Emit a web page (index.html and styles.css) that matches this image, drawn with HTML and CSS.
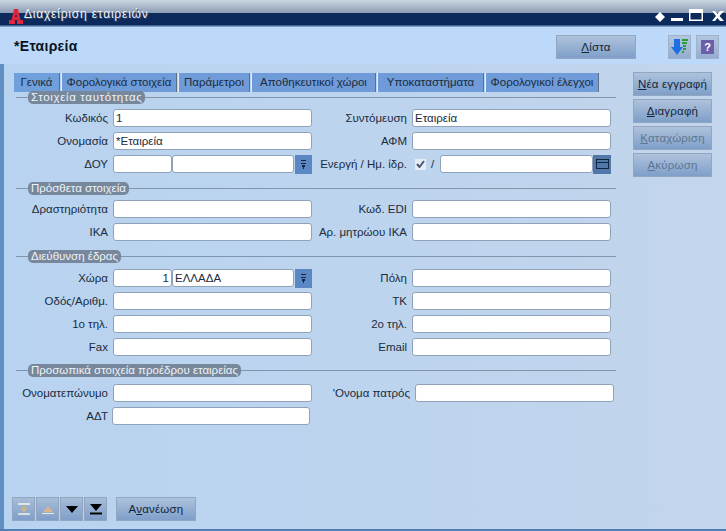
FILE: index.html
```html
<!DOCTYPE html>
<html lang="el">
<head>
    <meta charset="UTF-8">
    <meta name="viewport" content="width=device-width, initial-scale=1.0">
    <title>Διαχείριση εταιρειών</title>
    <link rel="stylesheet" href="styles.css">
</head>
<body>
    <div class="window">
        <div class="titlebar">
            <svg class="logo" width="14" height="15" viewBox="0 0 14 15">
                <path d="M5 0 H9 L11.5 11 H14 V15 H8 V12 L8.2 11 H5.8 L6 12 V15 H0 V11 H2.5 Z M7 4 L6.2 8 H7.8 Z" fill="#e0263c" fill-rule="evenodd"/>
            </svg>
            <span class="title-text">Διαχείριση εταιρειών</span>
            <div class="window-controls">
                <svg width="72" height="16" viewBox="0 0 72 16">
                    <path d="M7 4 L12 9 L7 14 L2 9 Z" fill="#fff"/>
                    <rect x="18" y="10" width="12" height="3" fill="#fff"/>
                    <path d="M36 1 H50 V13 H36 Z M37.5 5 V11.5 H48.5 V5 Z" fill="#fff" fill-rule="evenodd"/>
                    <path d="M59 3 L62 3 L64.5 6 L67 3 L71 3 L66.5 8 L71 13 L67 13 L64.5 10 L62 13 L59 13 L63 8 Z" fill="#fff"/>
                </svg>
            </div>
        </div>
        <div class="header">
            <div class="header-title">*Εταιρεία</div>
            <button class="btn btn-list"><u>Λ</u>ίστα</button>
            <div class="icon-btn icon-btn-first">
                <svg width="18" height="18" viewBox="0 0 18 18">
                    <path d="M3 1 H9 V9 H12 L6 17 L0 9 H3 Z" fill="#1f6fe0"/>
                    <path d="M11 2 H17 M11 5 H16 M12 8 H15 M12 11 H15 M11 14 H13" stroke="#2c9c3c" stroke-width="2"/>
                </svg>
            </div>
            <div class="icon-btn">
                <span class="help-mark">?</span>
            </div>
        </div>
        <div class="main">
            <div class="content">
                <div class="tabs">
                    <div class="tab tab-active">Γενικά</div>
                    <div class="tab">Φορολογικά στοιχεία</div>
                    <div class="tab">Παράμετροι</div>
                    <div class="tab">Αποθηκευτικοί χώροι</div>
                    <div class="tab">Υποκαταστήματα</div>
                    <div class="tab">Φορολογικοί έλεγχοι</div>
                </div>

                <div class="group group-first">
                    <div class="group-head"><span class="pill pill-wide">Στοιχεία ταυτότητας</span></div>
                    <div class="rows">
                        <label>Κωδικός</label><input class="field" value="1">
                        <label>Συντόμευση</label><input class="field" value="Εταιρεία">
                        <label>Ονομασία</label><input class="field" value="*Εταιρεία">
                        <label>ΑΦΜ</label><input class="field">
                        <label>ΔΟΥ</label>
                        <div class="combo">
                            <input class="field code">
                            <input class="field fill">
                            <div class="drop"><span class="drop-arrows"></span></div>
                        </div>
                        <label>Ενεργή / Ημ. ίδρ.</label>
                        <div class="combo date">
                            <span class="check">
                                <svg width="9" height="8" viewBox="0 0 9 8"><path d="M1 4 L3.5 7 L8 1" fill="none" stroke="#4a5a70" stroke-width="2"/></svg>
                            </span>
                            <span class="slash">/</span>
                            <input class="field fill">
                            <div class="drop drop-date"><span class="cal"></span></div>
                        </div>
                    </div>
                </div>

                <div class="group">
                    <div class="group-head"><span class="pill">Πρόσθετα στοιχεία</span></div>
                    <div class="rows">
                        <label>Δραστηριότητα</label><input class="field">
                        <label>Κωδ. EDI</label><input class="field">
                        <label>ΙΚΑ</label><input class="field">
                        <label>Αρ. μητρώου ΙΚΑ</label><input class="field">
                    </div>
                </div>

                <div class="group group-address">
                    <div class="group-head"><span class="pill">Διεύθυνση έδρας</span></div>
                    <div class="rows">
                        <label>Χώρα</label>
                        <div class="combo">
                            <input class="field code num" value="1">
                            <input class="field fill" value="ΕΛΛΑΔΑ">
                            <div class="drop"><span class="drop-arrows"></span></div>
                        </div>
                        <label>Πόλη</label><input class="field">
                        <label>Οδός/Αριθμ.</label><input class="field">
                        <label>ΤΚ</label><input class="field">
                        <label>1ο τηλ.</label><input class="field">
                        <label>2ο τηλ.</label><input class="field">
                        <label>Fax</label><input class="field">
                        <label>Email</label><input class="field">
                    </div>
                </div>

                <div class="group group-last">
                    <div class="group-head"><span class="pill">Προσωπικά στοιχεία προέδρου εταιρείας</span></div>
                    <div class="rows rows-wide">
                        <label>Ονοματεπώνυμο</label><input class="field">
                        <label>'Ονομα πατρός</label><input class="field">
                        <label>ΑΔΤ</label><input class="field field-short">
                    </div>
                </div>
            </div>

            <div class="side">
                <button class="btn"><u>Ν</u>έα εγγραφή</button>
                <button class="btn"><u>Δ</u>ιαγραφή</button>
                <button class="btn btn-off"><u>Κ</u>αταχώριση</button>
                <button class="btn btn-off"><u>Α</u>κύρωση</button>
            </div>
        </div>
        <div class="footer">
            <div class="nav-group">
                <div class="nav-btn">
                    <svg width="14" height="12" viewBox="0 0 14 12"><path d="M1 1 H13 M1 11 H13" stroke="#f4f4e8" stroke-width="1.5"/><path d="M7 2 L10 6 H4 Z M7 10 L10 6 H4 Z" fill="#c9b48a"/></svg>
                </div>
                <div class="nav-btn">
                    <svg width="14" height="12" viewBox="0 0 14 12"><path d="M7 3 L12 9 H2 Z" fill="#d8b490"/><path d="M1 10.5 H13" stroke="#e8e4d8" stroke-width="1.2"/></svg>
                </div>
                <div class="nav-btn">
                    <svg width="14" height="12" viewBox="0 0 14 12"><path d="M1 3 H13 L7 10 Z" fill="#000"/></svg>
                </div>
                <div class="nav-btn">
                    <svg width="14" height="12" viewBox="0 0 14 12"><path d="M1 1 H13 L7 8 Z" fill="#000"/><path d="M1 10.5 H13" stroke="#000" stroke-width="2"/></svg>
                </div>
            </div>
            <button class="btn btn-refresh">Α<u>ν</u>ανέωση</button>
        </div>
    </div>
</body>
</html>
```

FILE: styles.css
```css
html, body {
    margin: 0;
    padding: 0;
}
body {
    font-family: "Liberation Sans", Arial, sans-serif;
    font-size: 11.5px;
    color: #1a2c40;
    background: #b9d3ee;
}
.window {
    width: 726px;
    height: 531px;
    box-sizing: border-box;
    display: flex;
    flex-direction: column;
    border-bottom: 2px solid #4f7fb5;
    overflow: hidden;
    background: linear-gradient(to right, #b8d3f0, #c2d5ec);
}

/* title bar */
.titlebar {
    height: 27px;
    flex: none;
    display: flex;
    align-items: flex-end;
    box-sizing: border-box;
    padding-left: 4px;
    background: linear-gradient(to bottom, #c9d6e2 0, #8b9bb3 13px, #0c2a5c 13px, #0c2a5c 25px, #7d9ec8 26px);
}
.logo {
    flex: none;
    margin: 0 0 3px 5px;
}
.title-text {
    margin: 0 0 6px 1px;
    color: #f0f4fa;
    font-size: 12px;
    letter-spacing: 0.8px;
    text-shadow: 1px 1px 0 #3d4d68;
}
.window-controls {
    margin-left: auto;
    margin-right: 1px;
    height: 19px;
}

/* header */
.header {
    height: 37px;
    flex: none;
    display: flex;
    align-items: center;
    padding: 0 7px 0 14px;
    background: #bcd9fa;
}
.header-title {
    font-size: 14px;
    font-weight: bold;
    color: #0a1420;
    letter-spacing: 0.3px;
    margin-right: auto;
}
.btn {
    width: 80px;
    height: 24px;
    padding: 0;
    font-family: inherit;
    font-size: 11.5px;
    letter-spacing: 0.2px;
    color: #14253a;
    border: 1px solid #92a6bf;
    background: linear-gradient(to bottom, #aec2db, #7f9fc9);
}
.btn-list {
    margin-top: 2px;
}
.btn-off {
    color: #5d7692;
}
.icon-btn {
    width: 23px;
    height: 24px;
    margin-left: 5px;
    margin-top: 2px;
    display: flex;
    align-items: center;
    justify-content: center;
    border: 1px solid #9fb2ca;
    box-sizing: border-box;
    background: linear-gradient(to bottom, #b4c6de, #93add0);
}
.icon-btn-first {
    margin-left: 32px;
}
.help-mark {
    width: 13px;
    height: 14px;
    line-height: 14px;
    text-align: center;
    font-size: 11px;
    font-weight: bold;
    color: #fff;
    background: #6a5fa8;
}

/* main part */
.main {
    flex: 1;
    display: flex;
    border-left: 4px solid #5f8fc3;
    padding-top: 9px;
}
.content {
    width: 612px;
    flex: none;
}
.tabs {
    display: grid;
    grid-template-columns: 46px 116px 72px 125px 107px 114px;
    column-gap: 1px;
    height: 18px;
    margin-left: 10px;
}
.tab {
    height: 19px;
    line-height: 19px;
    box-sizing: border-box;
    text-align: center;
    color: #1a2c40;
    background: #6f9bd8;
    border-left: 1px solid #e4eefa;
    border-right: 1px solid #5c6f88;
    white-space: nowrap;
}
.tab-active {
    background: #6fa0dc;
    border-left: 0;
}
.group {
    margin: 9px 0 0 12px;
}
.group-first {
    margin-top: 0;
}
.group-head {
    display: flex;
    align-items: center;
    height: 13px;
    margin-bottom: 5px;
}
.group-address .group-head {
    margin-bottom: 6px;
}
.group-last {
    margin-top: 8px;
}
.group-last .group-head {
    margin-bottom: 7px;
}
.group-head::before {
    content: "";
    width: 12px;
    border-top: 1px solid #8194aa;
}
.group-head::after {
    content: "";
    flex: 1;
    border-top: 1px solid #8194aa;
}
.pill {
    height: 13px;
    line-height: 12px;
    padding: 0 3px;
    border-radius: 5px;
    background: #78889c;
    color: #eef2f6;
    white-space: nowrap;
}
.pill-wide {
    letter-spacing: 0.65px;
}
.rows {
    display: grid;
    grid-template-columns: 92px 199px 90px 199px;
    grid-auto-rows: 18px;
    column-gap: 5px;
    row-gap: 5px;
}
.rows-wide {
    grid-template-columns: 92px 199px 93px 199px;
}
.rows label {
    line-height: 19px;
    text-align: right;
    white-space: nowrap;
}
.field {
    width: 100%;
    height: 18px;
    margin: 0;
    padding: 0 2px;
    box-sizing: border-box;
    font-family: inherit;
    font-size: 11.5px;
    color: #1a2c40;
    background: #fff;
    border: 1px solid #8fa2b8;
    border-radius: 3px;
    outline: none;
}
.field-short {
    width: 198px;
    margin-left: -1px;
}
.combo {
    display: flex;
    height: 18px;
    align-items: center;
}
.code {
    width: 59px;
    flex: none;
}
.num {
    text-align: right;
}
.fill {
    flex: 1;
    width: auto;
    min-width: 0;
}
.drop {
    width: 17px;
    height: 19px;
    margin-left: 1px;
    flex: none;
    display: flex;
    align-items: center;
    justify-content: center;
    background: #5b87c4;
}
.drop-arrows {
    width: 5px;
    height: 9px;
    background:
        linear-gradient(#14263f, #14263f) 0 0 / 5px 1px no-repeat,
        linear-gradient(#14263f, #14263f) 0 3px / 5px 1px no-repeat,
        linear-gradient(#14263f, #14263f) 1px 5px / 3px 2px no-repeat,
        linear-gradient(#14263f, #14263f) 2px 7px / 1px 2px no-repeat;
}
.drop-date {
    width: 18px;
    margin-left: 0;
    background: #5278aa;
}
.cal {
    width: 13px;
    height: 10px;
    border: 1px solid #13263f;
    box-sizing: border-box;
    background: linear-gradient(#13263f, #13263f) 0 2px / 100% 1px no-repeat;
}
.check {
    width: 11px;
    height: 11px;
    flex: none;
    margin-left: 3px;
    display: flex;
    align-items: center;
    justify-content: center;
    background: #e4ecf6;
}
.slash {
    width: 14px;
    padding-left: 5px;
    box-sizing: border-box;
    flex: none;
}

/* right buttons */
.side {
    display: flex;
    flex-direction: column;
    gap: 3px;
    margin: -1px 0 0 17px;
}
.side .btn {
    width: 79px;
}

/* footer */
.footer {
    flex: none;
    display: flex;
    height: 32px;
    border-left: 4px solid #5f8fc3;
    padding-left: 8px;
}
.nav-group {
    display: flex;
    gap: 1px;
    height: 24px;
}
.nav-btn {
    width: 23px;
    height: 24px;
    display: flex;
    align-items: center;
    justify-content: center;
    box-sizing: border-box;
    border: 1px solid #92a6bf;
    background: linear-gradient(to bottom, #a7bcd8, #7f9fc9);
}
.btn-refresh {
    margin-left: 9px;
}
```
